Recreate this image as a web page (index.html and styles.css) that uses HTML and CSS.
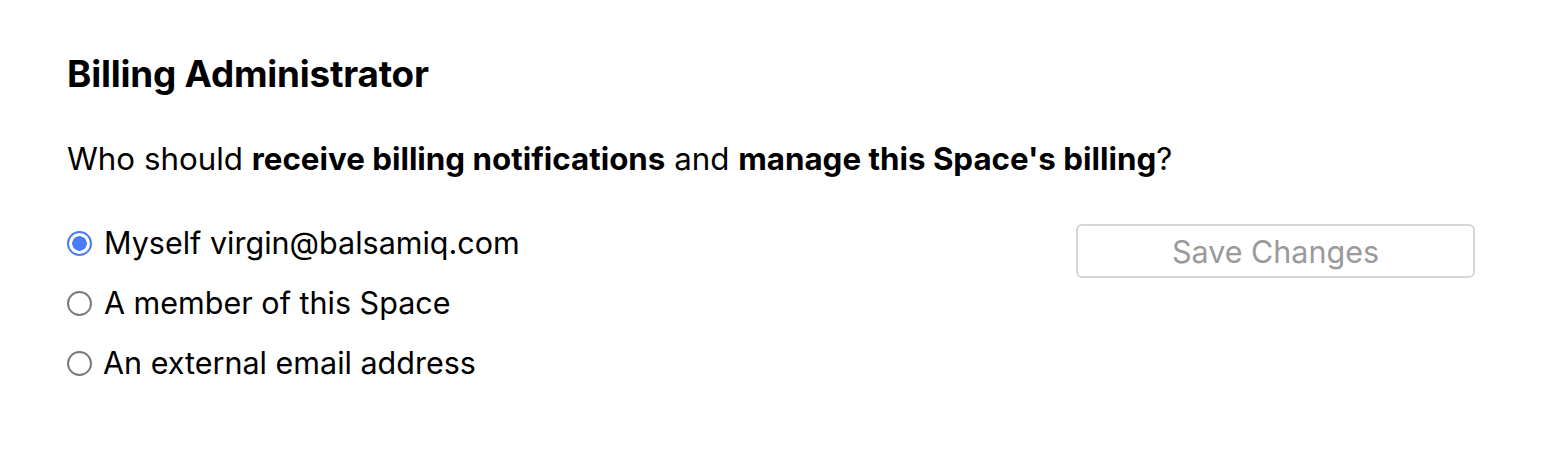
FILE: index.html
```html
<!DOCTYPE html>
<html>
<head>
<meta charset="utf-8">
<link rel="stylesheet" href="styles.css">
</head>
<body>
<main class="page">
  <h2 class="title">Billing Administrator</h2>
  <p class="question">Who should <strong>receive billing notifications</strong> and <strong>manage this Space's billing</strong>?</p>
  <div class="row">
    <div class="options">
      <label class="option"><input type="radio" name="admin" class="radio" checked><span>Myself virgin@balsamiq.com</span></label>
      <label class="option"><input type="radio" name="admin" class="radio"><span>A member of this Space</span></label>
      <label class="option option-ext"><input type="radio" name="admin" class="radio"><span>An external email address</span></label>
    </div>
    <button class="save" disabled>Save Changes</button>
  </div>
</main>
</body>
</html>
```
FILE: styles.css
```css
html, body {
  margin: 0;
  padding: 0;
  background: #ffffff;
}
body {
  font-family: Inter, "Noto Sans", sans-serif;
  color: #000000;
}
.page {
  padding: 52px 67px 0 67px;
}
.title {
  margin: 0;
  font-size: 36.8px;
  font-weight: 700;
  line-height: 44px;
  letter-spacing: -0.2px;
}
.question {
  margin: 43px 0 0 0;
  font-size: 31.3px;
  line-height: 40px;
}
.question strong {
  font-weight: 700;
}
.row {
  display: flex;
  justify-content: space-between;
  align-items: flex-start;
  margin-top: 44px;
}
.options {
  display: flex;
  flex-direction: column;
  gap: 20px;
}
.option {
  display: flex;
  align-items: center;
  gap: 12px;
  font-size: 30.5px;
  line-height: 40px;
}
.radio {
  appearance: none;
  -webkit-appearance: none;
  margin: 0;
  width: 25px;
  height: 25px;
  border-radius: 50%;
  border: 2px solid #7a7a7a;
  background: #fff;
  box-sizing: border-box;
}
.radio:checked {
  border: 2px solid #4a7cf6;
  background: radial-gradient(circle, #4a7cf6 0 7px, #ffffff 7.5px);
}
.option-ext {
  gap: 11px;
}
.save {
  width: 399px;
  height: 54px;
  margin-top: 1px;
  border: 2px solid #d6d6da;
  border-radius: 6px;
  background: #ffffff;
  color: #9a9a9a;
  font-family: Inter, "Noto Sans", sans-serif;
  font-size: 30.5px;
}
```
